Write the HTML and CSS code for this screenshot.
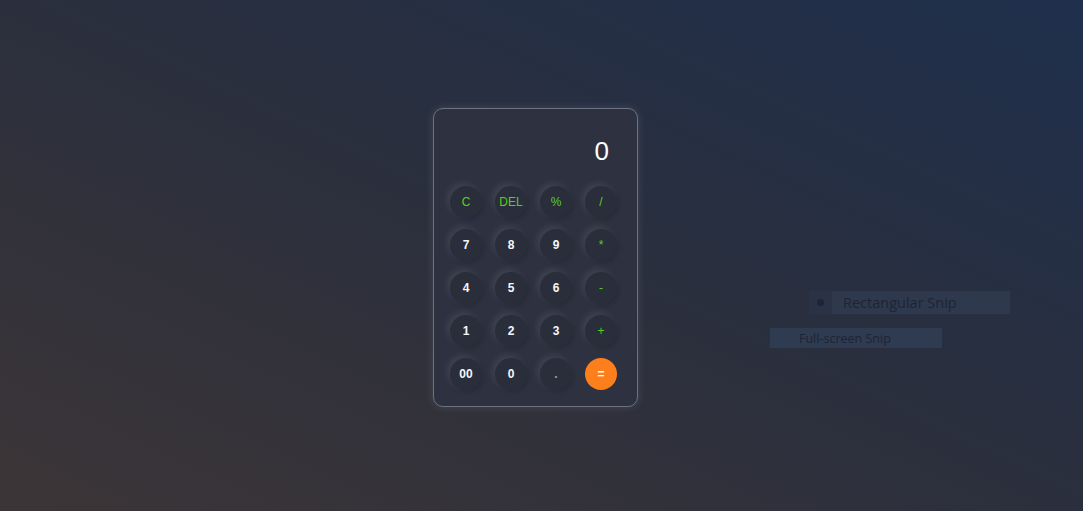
FILE: index.html
```html
<!DOCTYPE html>
<html>
<head>
<meta charset="utf-8">
<link rel="stylesheet" href="styles.css">
</head>
<body>
<div class="stage">
  <div class="calc">
    <div class="display">0</div>
    <div class="keys">
      <button class="key op">C</button>
      <button class="key op">DEL</button>
      <button class="key op">%</button>
      <button class="key op">/</button>
      <button class="key">7</button>
      <button class="key">8</button>
      <button class="key">9</button>
      <button class="key op">*</button>
      <button class="key">4</button>
      <button class="key">5</button>
      <button class="key">6</button>
      <button class="key op">-</button>
      <button class="key">1</button>
      <button class="key">2</button>
      <button class="key">3</button>
      <button class="key op">+</button>
      <button class="key">00</button>
      <button class="key">0</button>
      <button class="key dim">.</button>
      <button class="key eq">=</button>
    </div>
  </div>
  <div class="snip snip-rect"><span class="snip-icon"><span class="dot"></span></span><span class="snip-label">Rectangular Snip</span></div>
  <div class="snip snip-full"><span class="snip-label">Full-screen Snip</span></div>
</div>
</body>
</html>
```
FILE: styles.css
```css
html, body {
  margin: 0;
  padding: 0;
  width: 100%;
  height: 100%;
  overflow: hidden;
}
body {
  background: linear-gradient(to top right, #3c3537 0%, #2b2f3d 50%, #1f2f4c 100%);
  font-family: "Liberation Sans", Arial, sans-serif;
}
.stage {
  position: relative;
  width: 1083px;
  height: 511px;
  display: flex;
  align-items: flex-start;
  padding: 108px 0 0 433px;
  box-sizing: border-box;
}
.calc {
  width: 205px;
  height: 299px;
  box-sizing: border-box;
  border: 1px solid #6d7281;
  border-radius: 10px;
  background: #2d3140;
  box-shadow: 0 0 8px rgba(255,255,255,0.12);
  padding: 0 19px 15px 16px;
  display: flex;
  flex-direction: column;
}
.display {
  height: 77px;
  box-sizing: border-box;
  padding-top: 27px;
  padding-right: 9px;
  text-align: right;
  color: #ffffff;
  font-size: 26px;
  line-height: 30px;
}
.keys {
  display: grid;
  grid-template-columns: repeat(4, 32px);
  grid-auto-rows: 32px;
  column-gap: 13px;
  row-gap: 11px;
}
.key {
  width: 32px;
  height: 32px;
  border-radius: 50%;
  border: none;
  padding: 0;
  background: #2a2e3b;
  color: #f4f6ff;
  font-family: "Liberation Sans", Arial, sans-serif;
  font-size: 12px;
  font-weight: bold;
  box-shadow: -3px -3px 6px rgba(255,255,255,0.09), 2px 2px 4px rgba(0,0,0,0.12);
  display: flex;
  align-items: center;
  justify-content: center;
}
.key.op {
  color: #55d11b;
  font-weight: normal;
}
.key.dim {
  color: #9aa0ad;
}
.key.eq {
  background: #fd7f1b;
  color: #ffffff;
  box-shadow: none;
}
.snip {
  position: absolute;
  display: flex;
  align-items: center;
  font-family: "Open Sans", "Noto Sans", sans-serif;
  color: #1e2434;
}
.snip-rect {
  left: 809px;
  top: 291px;
  width: 201px;
  height: 23px;
  background: #2e394d;
  font-size: 14.5px;
}
.snip-icon {
  width: 23px;
  height: 23px;
  background: #2a3346;
  display: flex;
  align-items: center;
  justify-content: center;
  margin-right: 11px;
}
.dot {
  width: 7px;
  height: 7px;
  border-radius: 50%;
  background: #1e2434;
}
.snip-full {
  left: 770px;
  top: 328px;
  width: 172px;
  height: 20px;
  background: #2f3b50;
  padding-left: 29px;
  box-sizing: border-box;
  font-size: 12.5px;
}
```
